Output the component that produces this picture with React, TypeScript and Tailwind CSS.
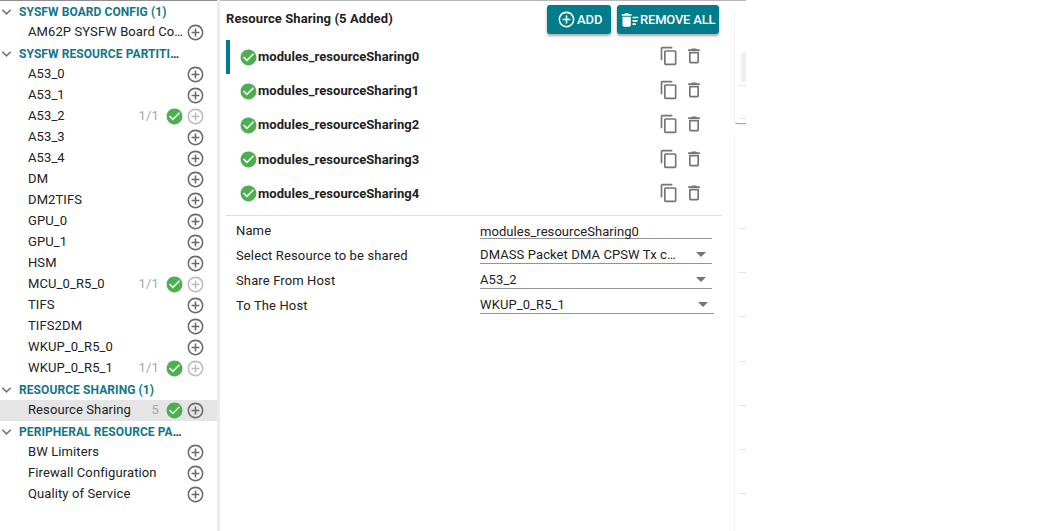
import { Fragment } from "react";
import {
  MdAddCircleOutline,
  MdCheckCircle,
  MdContentCopy,
  MdDeleteOutline,
  MdDeleteSweep,
} from "react-icons/md";

type Item = { label: string; count?: string; full?: boolean; selected?: boolean };
type Group = { title: string; cut?: boolean; items: Item[] };

const groups: Group[] = [
  { title: "SYSFW BOARD CONFIG (1)", items: [{ label: "AM62P SYSFW Board Co…" }] },
  {
    title: "SYSFW RESOURCE PARTITI",
    cut: true,
    items: [
      { label: "A53_0" },
      { label: "A53_1" },
      { label: "A53_2", count: "1/1", full: true },
      { label: "A53_3" },
      { label: "A53_4" },
      { label: "DM" },
      { label: "DM2TIFS" },
      { label: "GPU_0" },
      { label: "GPU_1" },
      { label: "HSM" },
      { label: "MCU_0_R5_0", count: "1/1", full: true },
      { label: "TIFS" },
      { label: "TIFS2DM" },
      { label: "WKUP_0_R5_0" },
      { label: "WKUP_0_R5_1", count: "1/1", full: true },
    ],
  },
  {
    title: "RESOURCE SHARING (1)",
    items: [{ label: "Resource Sharing", count: "5", selected: true }],
  },
  {
    title: "PERIPHERAL RESOURCE PA",
    cut: true,
    items: [
      { label: "BW Limiters" },
      { label: "Firewall Configuration" },
      { label: "Quality of Service" },
    ],
  },
];

const modules = [0, 1, 2, 3, 4].map((n) => `modules_resourceSharing${n}`);

const fields = [
  { label: "Select Resource to be shared", value: "DMASS Packet DMA CPSW Tx c…", width: "w-[232px]" },
  { label: "Share From Host", value: "A53_2", width: "w-[232px]" },
  { label: "To The Host", value: "WKUP_0_R5_1", width: "w-[234px]" },
];

function Chevron() {
  return (
    <svg className="ml-[1px] mr-[7px] h-[21px] w-[11px] shrink-0" viewBox="0 0 11 21" fill="none">
      <path d="M1.3 8.7 5.5 12.9 9.7 8.7" stroke="#757575" strokeWidth="1.6" />
    </svg>
  );
}

function Sidebar() {
  return (
    <nav className="w-[217px] shrink-0 border-t border-[#8e8e8e] text-[13px]">
      {groups.map((g) => (
        <Fragment key={g.title}>
          <div className="flex h-[21px] items-center whitespace-nowrap text-[12px] font-bold leading-[21px] tracking-[0.08px] text-[#117788]">
            <Chevron />
            <span className="pt-[2px] leading-[19px]">
              {g.title}
              {g.cut && <span className="text-[#333333]">…</span>}
            </span>
          </div>
          {g.items.map((it) => (
            <div
              key={it.label}
              className={`flex h-[21px] items-start pl-7 pr-3 leading-[19px] ${it.selected ? "bg-[#e5e5e5]" : ""}`}
            >
              <span className="grow whitespace-nowrap tracking-[0.1px]">{it.label}</span>
              {it.count && (
                <>
                  <span className="mr-[6px] tracking-[0.2px] text-[#a8a8a8]">{it.count}</span>
                  <MdCheckCircle className="mr-[2px] mt-[1px] size-[19px] shrink-0 text-[#4caf50]" />
                </>
              )}
              <MdAddCircleOutline
                className={`mt-[1px] size-[19px] shrink-0 ${it.full ? "text-[#bdbdbd]" : "text-[#6c6c6c]"}`}
              />
            </div>
          ))}
        </Fragment>
      ))}
    </nav>
  );
}

function Caret() {
  return (
    <svg className="mr-[6px] h-[5px] w-[10px] shrink-0" viewBox="0 0 10 5">
      <path d="M0 0h10L5 5z" fill="#757575" />
    </svg>
  );
}

function Details() {
  return (
    <div className="pl-[10px] pt-[2px] text-[13px] tracking-[0.13px]">
      <div className="flex h-[26px] items-start">
        <span className="w-[244px] leading-[26px]">Name</span>
        <div className="h-[21px] w-[232px] border-b border-[#949494] leading-[28px]">
          <span className="tracking-[0.05px]">modules_resourceSharing0</span>
        </div>
      </div>
      {fields.map((f) => (
        <div key={f.label} className="flex h-[25px]">
          <span className="w-[244px] leading-[23px]">{f.label}</span>
          <div className={`flex h-[20px] items-center border-b border-[#949494] pt-[2px] ${f.width}`}>
            <span className="grow leading-[20px] tracking-[0.1px]">{f.value}</span>
            <Caret />
          </div>
        </div>
      ))}
    </div>
  );
}

const button =
  "flex h-[29px] items-center rounded-[3px] bg-[#007c8a] text-[13px] font-medium text-white shadow-[0_2px_3px_rgba(0,0,0,0.35)]";

function Content() {
  return (
    <main className="w-[496px] shrink-0">
      <header className="flex h-[39px] items-start pt-1">
        <h1 className="grow text-[13px] font-bold leading-[28px] tracking-[0.1px]">
          Resource Sharing (5 Added)
        </h1>
        <button className={`${button} mr-[6px] w-[64px] pl-[10px]`}>
          <MdAddCircleOutline className="mr-[1px] size-[19px]" />
          <span className="-tracking-[0.1px]">ADD</span>
        </button>
        <button className={`${button} mr-[3px] w-[102px] pl-[3px]`}>
          <MdDeleteSweep className="size-5 shrink-0" />
          <span className="whitespace-nowrap -tracking-[0.2px]">REMOVE ALL</span>
        </button>
      </header>
      <ul className="h-[176px] border-b border-[#dedede]">
        {modules.map((m, i) => (
          <li
            key={m}
            className={`flex h-[34.2px] items-center border-l-4 pl-[9px] pr-[18.5px] ${
              i === 0 ? "border-[#007c8a]" : "border-transparent"
            }`}
          >
            <MdCheckCircle className="size-[19px] text-[#4caf50]" />
            <span className="grow pb-[0.6px] text-[13px] font-bold tracking-[0.05px]">{m}</span>
            <MdContentCopy className="mb-[2px] mr-[5px] size-5 text-[#757575]" />
            <MdDeleteOutline className="mb-[2px] size-5 text-[#757575]" />
          </li>
        ))}
      </ul>
      <Details />
    </main>
  );
}

function NextPanel() {
  return (
    <div className="flex w-3 shrink-0 flex-col">
      <section className="mt-[11px] h-[112px] rounded-bl-[4px] border-b border-l border-b-[#a8a8a8] border-l-[#f1f1f1] pl-1 shadow-[0_1px_1px_#eeeeee]">
        <div className="mt-[40px] ml-[2px] h-[30px] rounded-l-[3px] bg-[#eeeeee]" />
        <div className="mt-[3px] h-[34px] border-y border-[#e2e2e2]" />
      </section>
      <section className="mt-[10px] grow border-l border-[#f5f5f5] pl-1 pt-[51px]">
        {[0, 1, 2, 3, 4, 5, 6].map((n) => (
          <div key={n} className="h-[44.15px] border-b border-[#e2e2e2]" />
        ))}
      </section>
    </div>
  );
}

export default function App() {
  return (
    <div className="flex h-[531px] w-[1039px] overflow-hidden bg-white font-['Roboto',sans-serif] text-[#222222]">
      <Sidebar />
      <div className="w-[3px] shrink-0 bg-[#ececec]" />
      <div className="flex w-[526px] border-t border-[#b7b7b7] pl-[6px]">
        <Content />
        <div className="w-3 shrink-0" />
        <NextPanel />
      </div>
    </div>
  );
}
